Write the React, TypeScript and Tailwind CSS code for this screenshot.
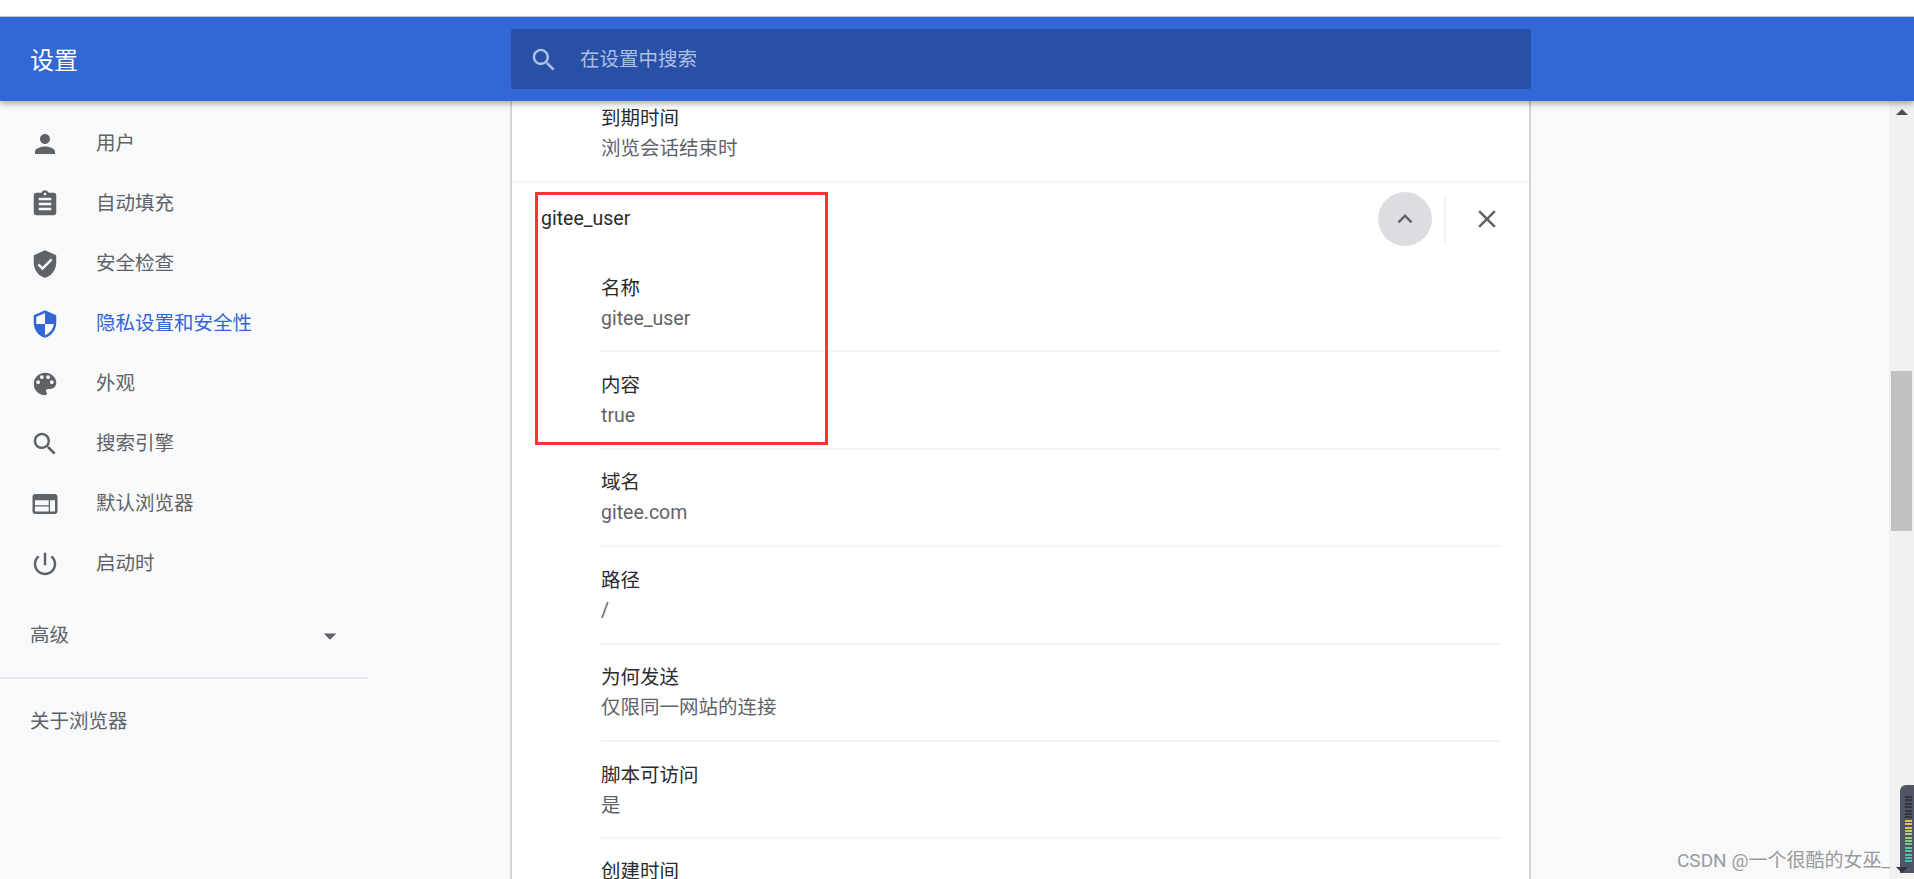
function Icon({ d, size = 30, className = "" }: { d: string; size?: number; className?: string }) {
  return (
    <svg width={size} height={size} viewBox="0 0 24 24" fill="currentColor" className={className}>
      <path d={d} />
    </svg>
  );
}

const searchPath =
  "M15.5 14h-.79l-.28-.27C15.41 12.59 16 11.11 16 9.5 16 5.91 13.09 3 9.5 3S3 5.91 3 9.5 5.91 16 9.5 16c1.61 0 3.09-.59 4.23-1.57l.27.28v.79l5 4.99L20.49 19l-4.99-5zm-6 0C7.01 14 5 11.99 5 9.5S7.01 5 9.5 5 14 7.01 14 9.5 11.99 14 9.5 14z";

const navItems = [
  {
    label: "用户",
    d: "M12 12c2.21 0 4-1.79 4-4s-1.79-4-4-4-4 1.79-4 4 1.79 4 4 4zm0 2c-2.67 0-8 1.34-8 4v2h16v-2c0-2.66-5.33-4-8-4z",
  },
  {
    label: "自动填充",
    d: "M19 3h-4.18C14.4 1.84 13.3 1 12 1c-1.3 0-2.4.84-2.82 2H5c-1.1 0-2 .9-2 2v14c0 1.1.9 2 2 2h14c1.1 0 2-.9 2-2V5c0-1.1-.9-2-2-2zm-7 0c.55 0 1 .45 1 1s-.45 1-1 1-1-.45-1-1 .45-1 1-1zm5 14H7v-2h10v2zm0-4H7v-2h10v2zm0-4H7V7h10v2z",
  },
  {
    label: "安全检查",
    d: "M12 1L3 5v6c0 5.55 3.84 10.74 9 12 5.16-1.26 9-6.45 9-12V5l-9-4zm-2 16l-4-4 1.41-1.41L10 14.17l6.59-6.59L18 9l-8 8z",
  },
  {
    label: "隐私设置和安全性",
    active: true,
    d: "M12 1L3 5v6c0 5.55 3.84 10.74 9 12 5.16-1.26 9-6.45 9-12V5l-9-4zm0 10.99h7c-.53 4.12-3.28 7.79-7 8.94V12H5V6.3l7-3.11v8.8z",
  },
  {
    label: "外观",
    d: "M12 3c-4.97 0-9 4.03-9 9s4.03 9 9 9c.83 0 1.5-.67 1.5-1.5 0-.39-.15-.74-.39-1.01-.23-.26-.38-.61-.38-.99 0-.83.67-1.5 1.5-1.5H16c2.76 0 5-2.24 5-5 0-4.42-4.03-8-9-8zm-5.5 9c-.83 0-1.5-.67-1.5-1.5S5.67 9 6.5 9 8 9.67 8 10.5 7.33 12 6.5 12zm3-4C8.67 8 8 7.33 8 6.5S8.67 5 9.5 5s1.5.67 1.5 1.5S10.33 8 9.5 8zm5 0c-.83 0-1.5-.67-1.5-1.5S13.67 5 14.5 5s1.5.67 1.5 1.5S15.33 8 14.5 8zm3 4c-.83 0-1.5-.67-1.5-1.5S16.67 9 17.5 9s1.5.67 1.5 1.5-.67 1.5-1.5 1.5z",
  },
  { label: "搜索引擎", d: searchPath },
  {
    label: "默认浏览器",
    d: "M20 4H4c-1.1 0-1.99.9-1.99 2L2 18c0 1.1.9 2 2 2h16c1.1 0 2-.9 2-2V6c0-1.1-.9-2-2-2zm-5 14H4v-4h11v4zm0-5H4V9h11v4zm5 5h-4V9h4v9z",
  },
  {
    label: "启动时",
    d: "M13 3h-2v10h2V3zm4.83 2.17l-1.42 1.42C17.99 7.86 19 9.81 19 12c0 3.87-3.13 7-7 7s-7-3.13-7-7c0-2.19 1.01-4.14 2.58-5.42L6.17 5.17C4.23 6.82 3 9.26 3 12c0 4.97 4.03 9 9 9s9-4.03 9-9c0-2.74-1.23-5.18-3.17-6.83z",
  },
];

const cookieRows = [
  { label: "名称", value: "gitee_user" },
  { label: "内容", value: "true" },
  { label: "域名", value: "gitee.com" },
  { label: "路径", value: "/" },
  { label: "为何发送", value: "仅限同一网站的连接" },
  { label: "脚本可访问", value: "是" },
];

const meterBars = [
  "bg-[#33363f]",
  "bg-[#33363f]",
  "bg-[#33363f]",
  "bg-[#33363f]",
  "bg-[#33363f]",
  "bg-[#33363f]",
  "bg-[#33363f]",
  "bg-[#dcc23c]",
  "bg-[#dcc74a]",
  "bg-[#d3c956]",
  "bg-[#c4ca62]",
  "bg-[#b2cb6c]",
  "bg-[#9acb78]",
  "bg-[#84ca84]",
  "bg-[#70c98e]",
  "bg-[#5fc898]",
  "bg-[#52c7a0]",
  "bg-[#48c6a6]",
  "bg-[#40c5aa]",
  "bg-[#3cc4ae]",
];

function CookieRow({ label, value }: { label: string; value: string }) {
  return (
    <div className="ml-[89px] mr-[28px] flex h-[97.4px] flex-col justify-center border-b-2 border-[#f1f3f4] pt-[2px]">
      <div className="h-[30px] leading-[30px] text-[#2a2b2e]">{label}</div>
      <div className="h-[30px] leading-[30px] text-[#5f6368]">{value}</div>
    </div>
  );
}

function Sidebar() {
  return (
    <aside className="flex w-[510px] shrink-0 flex-col pt-[13px]">
      {navItems.map((item) => (
        <div
          key={item.label}
          className={
            item.active
              ? "flex h-[60px] w-[369px] items-center pl-[30px] text-[#3367d6]"
              : "flex h-[60px] w-[369px] items-center pl-[30px] text-[#5f6368]"
          }
        >
          <Icon d={item.d} />
          <span className="ml-[36px]">{item.label}</span>
        </div>
      ))}
      <div className="mt-[12px] flex h-[60px] w-[369px] items-center justify-between pl-[30px] pr-[24px] text-[#5f6368]">
        <span>高级</span>
        <Icon d="M7 10l5 5 5-5z" />
      </div>
      <div className="mt-[11px] w-[369px] border-t-2 border-[#e8eaed]" />
      <div className="flex h-[86px] w-[369px] items-center pl-[30px] text-[#5f6368]">关于浏览器</div>
    </aside>
  );
}

function CookieCard() {
  return (
    <main className="relative w-[1021px] shrink-0 border-x-2 border-[#d4d5d7] bg-white">
      <div className="flex h-[82px] flex-col border-b-2 border-[#f1f3f4] pl-[89px] pt-[3px]">
        <div className="h-[30px] leading-[30px] text-[#2a2b2e]">到期时间</div>
        <div className="h-[30px] leading-[30px] text-[#5f6368]">浏览会话结束时</div>
      </div>
      <div className="flex h-[72px] items-center pb-[1px] pl-[29px] pr-[15px]">
        <span className="flex-1 text-[#2a2b2e]">gitee_user</span>
        <div className="flex h-[54px] w-[54px] items-center justify-center rounded-full bg-[#dcdde0] text-[#5f6368]">
          <Icon d="M7.41 15.41L12 10.83l4.59 4.58L18 14l-6-6-6 6z" />
        </div>
        <div className="ml-[12px] mr-[14px] h-[48px] w-[2px] bg-[#f1f3f4]" />
        <button className="flex h-[54px] w-[54px] items-center justify-center text-[#5f6368]">
          <Icon d="M19 6.41L17.59 5 12 10.59 6.41 5 5 6.41 10.59 12 5 17.59 6.41 19 12 13.41 17.59 19 19 17.59 13.41 12z" />
        </button>
      </div>
      {cookieRows.map((row) => (
        <CookieRow key={row.label} label={row.label} value={row.value} />
      ))}
      <div className="ml-[89px] pt-[18px] leading-[30px] text-[#2a2b2e]">创建时间</div>
      <div className="absolute left-[23px] top-[91px] h-[253px] w-[293px] border-[3px] border-[#fb3235]" />
    </main>
  );
}

function Scrollbar() {
  return (
    <div className="relative w-[25px] shrink-0 bg-[#f1f1f1]">
      <div className="ml-[7px] mt-[8px] h-0 w-0 border-x-[6px] border-b-[6px] border-x-transparent border-b-[#505050]" />
      <div className="ml-[2px] mt-[256px] h-[160px] w-[21px] bg-[#c1c1c1]" />
    </div>
  );
}

function MeterWidget() {
  return (
    <div className="absolute right-0 top-[785px] flex h-[88px] w-[14px] flex-col items-end rounded-tl-[6px] bg-[#4f5565] pr-[2px] pt-[11px]">
      {meterBars.map((bar, i) => (
        <div key={i} className={"mb-[1.4px] h-[2px] w-[7px] " + bar} />
      ))}
      <div className="absolute left-[-4px] top-[82px] h-0 w-0 border-x-[6px] border-t-[6px] border-x-transparent border-t-[#33363f]" />
    </div>
  );
}

export default function App() {
  return (
    <div className="relative h-[879px] w-[1914px] overflow-hidden bg-white text-[19.5px] [font-family:Roboto,'Noto_Sans_CJK_SC',sans-serif]">
      <div className="h-[17px] border-b border-[#c8c8c8] bg-white" />
      <header className="relative z-10 flex h-[84px] items-center bg-[#3367d6] shadow-[0_3px_6px_rgba(0,0,0,0.3)]">
        <div className="w-[511px] shrink-0 pl-[30px] pt-[3px] text-[24px] text-white">设置</div>
        <div className="flex h-[60px] w-[1020px] items-center rounded-[3px] bg-[#2850a7] pl-[18px] pt-[1px] text-[#aebfe3]">
          <Icon d={searchPath} />
          <span className="ml-[21px]">在设置中搜索</span>
        </div>
      </header>
      <div className="flex h-[778px] bg-[#f8f9fa]">
        <Sidebar />
        <CookieCard />
        <div className="flex-1" />
        <Scrollbar />
      </div>
      <MeterWidget />
      <div className="absolute left-[1677px] top-[849px] text-[19px] leading-[24px] text-[#9a9a9a]">CSDN @一个很酷的女巫_</div>
    </div>
  );
}
